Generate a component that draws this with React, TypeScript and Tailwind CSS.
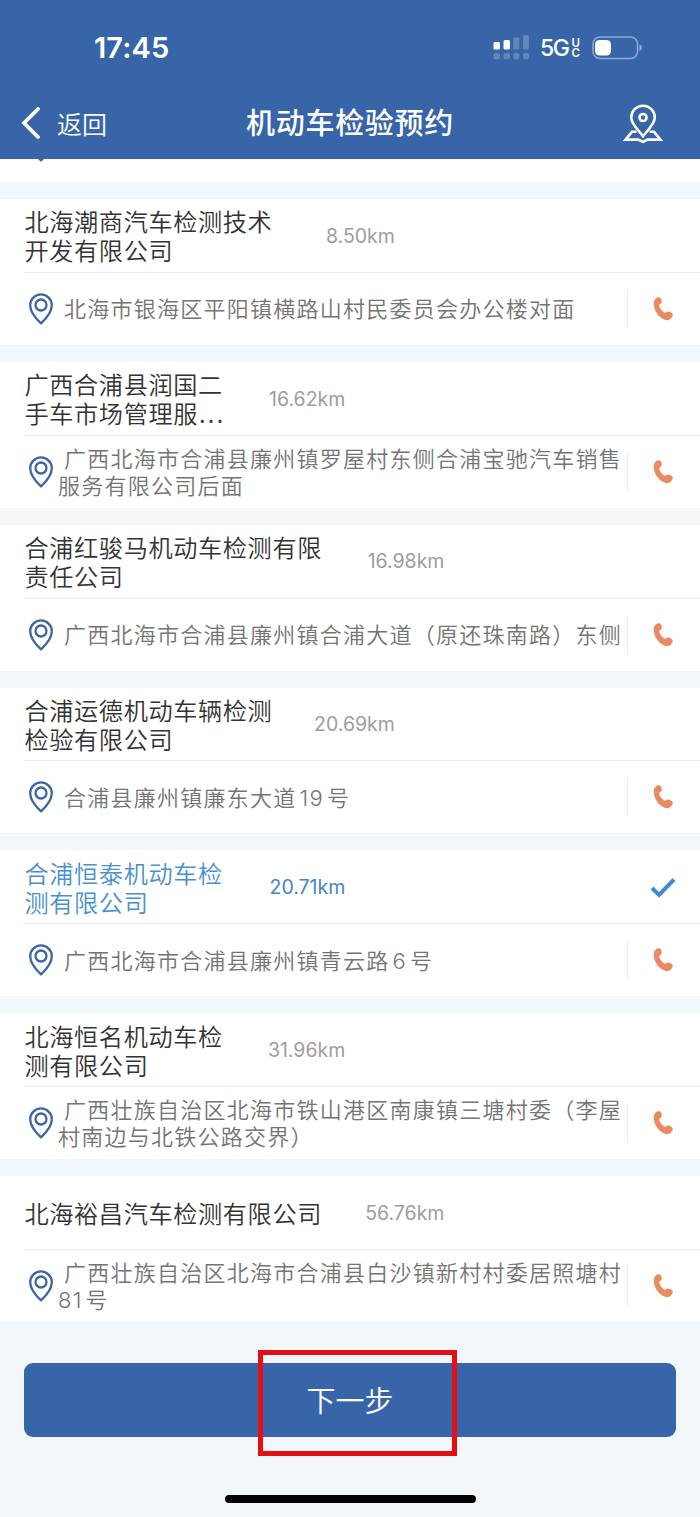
import { Fragment } from 'react';
import { clsx } from 'clsx';

interface Station {
  name: string[];
  truncated?: boolean;
  distance: string;
  address: string[];
  selected?: boolean;
}

const stations: Station[] = [
  {
    name: ['北海潮商汽车检测技术', '开发有限公司'],
    distance: '8.50km',
    address: ['北海市银海区平阳镇横路山村民委员会办公楼对面'],
  },
  {
    name: ['广西合浦县润国二', '手车市场管理服'],
    truncated: true,
    distance: '16.62km',
    address: ['广西北海市合浦县廉州镇罗屋村东侧合浦宝驰汽车销售', '服务有限公司后面'],
  },
  {
    name: ['合浦红骏马机动车检测有限', '责任公司'],
    distance: '16.98km',
    address: ['广西北海市合浦县廉州镇合浦大道（原还珠南路）东侧'],
  },
  {
    name: ['合浦运德机动车辆检测', '检验有限公司'],
    distance: '20.69km',
    address: ['合浦县廉州镇廉东大道19号'],
  },
  {
    name: ['合浦恒泰机动车检', '测有限公司'],
    distance: '20.71km',
    address: ['广西北海市合浦县廉州镇青云路6号'],
    selected: true,
  },
  {
    name: ['北海恒名机动车检', '测有限公司'],
    distance: '31.96km',
    address: ['广西壮族自治区北海市铁山港区南康镇三塘村委（李屋', '村南边与北铁公路交界）'],
  },
  {
    name: ['北海裕昌汽车检测有限公司'],
    distance: '56.76km',
    address: ['广西壮族自治区北海市合浦县白沙镇新村村委居照塘村', '81号'],
  },
];

function PinIcon() {
  return (
    <svg width="24" height="32" viewBox="0 0 24 32" fill="none" stroke="#3c66a3" strokeWidth="2.300">
      <path d="M12 30.300C9.500 28 1.200 19.500 1.200 12.200a10.800 10.800 0 0 1 21.600 0C22.800 19.500 14.500 28 12 30.300Z" strokeLinejoin="round" />
      <circle cx="12" cy="12" r="5.500" />
    </svg>
  );
}

function PhoneIcon() {
  return (
    <svg width="21" height="26" viewBox="0 0 22 26" fill="#ea8a62">
      <path d="M2.300 2.500C3.700 .9 6.300.3 7.700 1.200c1.300.9 1.900 4.200 1.200 5.600-.5 1-2 1.200-2.300 2.100-.5 1.900 3.200 7 5.400 8 1.200.4 2.200-1.100 3.600-1.200 1.900-.1 4.900 1.500 5.100 3.300.2 2.100-2.700 5.600-5.400 5.700C8.900 24.900 1.300 17 .9 8.600.8 6.300.9 4 2.300 2.500Z" />
    </svg>
  );
}

function StatusBar() {
  return (
    <div className="flex h-24 items-center justify-between pr-[57px] pl-[94px]">
      <span className="font-['Inter'] text-[29px] font-semibold tracking-[0.100px]">17:45</span>
      <div className="flex items-center">
        <svg width="37" height="26" viewBox="0 0 37 26" fill="#fff">
          <rect x="0.500" y="7" width="6.500" height="7.500" rx="1.500" />
          <rect x="10.500" y="5" width="6.500" height="9.500" rx="1.500" />
          <g fillOpacity=".22">
            <rect x="20.300" y="2.500" width="6" height="12" rx="1.500" />
            <rect x="30" y="0" width="6" height="14.500" rx="1.500" />
            <rect x="0.500" y="18" width="6.500" height="6.500" rx="2" />
            <rect x="10.500" y="18" width="6.500" height="6.500" rx="2" />
            <rect x="20.300" y="18" width="6" height="6.500" rx="2" />
            <rect x="30" y="18" width="6" height="6.500" rx="2" />
          </g>
        </svg>
        <span className="ml-2.5 font-['Inter'] text-[23px] font-medium tracking-[-1.500px]">5G</span>
        <span className="ml-[3px] flex flex-col font-['Inter'] text-[11.500px] leading-[10px] font-semibold">
          <span>U</span>
          <span>C</span>
        </span>
        <svg className="ml-3" width="51" height="24" viewBox="0 0 51 24" fill="none">
          <rect x="1" y="1" width="44.500" height="21.500" rx="7" stroke="#fff" strokeOpacity=".45" strokeWidth="1.600" />
          <rect x="3" y="4" width="16" height="15.500" rx="4.500" fill="#fff" />
          <path d="M47.500 8.500c3 1 3 5.500 0 6.500Z" fill="#fff" fillOpacity=".5" />
        </svg>
      </div>
    </div>
  );
}

function NavBar() {
  return (
    <div className="grid h-[63px] grid-cols-[1fr_auto_1fr] items-center pb-2.5">
      <div className="flex items-center pl-5">
        <svg width="21" height="32" viewBox="0 0 21 32" fill="none" stroke="#fff" strokeWidth="3.800">
          <path d="M18 2 4 16l14 14" strokeLinecap="round" />
        </svg>
        <span className="ml-4 text-[25px] leading-9 font-[350]">返回</span>
      </div>
      <h1 className="-mt-[3px] text-[29px] leading-9 font-medium tracking-[0.700px]">机动车检验预约</h1>
      <svg className="mt-0.5 mr-9 justify-self-end" width="42" height="40" viewBox="0 0 42 40" fill="none" stroke="#fff" strokeWidth="2.600">
        <path d="M21 32.200C18.500 28.500 9.200 20.500 9.200 13.500a11.800 11.800 0 0 1 23.600 0C32.800 20.500 23.500 28.500 21 32.200Z" />
        <circle cx="21" cy="13.500" r="3.500" />
        <path d="M14.500 27.800H10L3.500 35.600H16.500L21 38l4.500-2.400h13L32 27.800h-4.500" />
      </svg>
    </div>
  );
}

// numbers inside an address get a little air on both sides
function AddressLine({ text }: { text: string }) {
  return (
    <>
      {text.split(/(\d+)/).filter(Boolean).map((part, i) =>
        /^\d+$/.test(part) ? (
          <span key={i} className={clsx('mr-[3px] inline-block indent-0', i > 0 && 'ml-[3px]')}>
            {part}
          </span>
        ) : (
          <Fragment key={i}>{part}</Fragment>
        ),
      )}
    </>
  );
}

function StationCard({ station }: { station: Station }) {
  return (
    <li className="bg-white">
      <div className="ml-6 flex h-[73.850px] items-center border-b border-[#e8eaeb] pt-0.5 pr-6">
        <h2
          className={clsx(
            'mb-0.5 pl-[0.500px] text-[24.200px] leading-[29px] font-[350] tracking-[0.600px] whitespace-nowrap',
            station.selected ? 'text-[#4a90cf]' : 'text-[#333333]',
          )}
        >
          {station.name.map((line, i) => (
            <span key={line} className="block">
              {line}
              {station.truncated && i === station.name.length - 1 && (
                <span className="-mr-1 ml-px tracking-[2.300px]">...</span>
              )}
            </span>
          ))}
        </h2>
        <span
          className={clsx(
            "w-[122.500px] text-right font-['Inter'] text-[19.500px]",
            station.selected ? 'text-[#4585c2]' : 'text-[#9d9d9d]',
          )}
        >
          {station.distance}
        </span>
        {station.selected && (
          <svg className="ml-auto" width="26" height="22" viewBox="0 0 26 22" fill="none" stroke="#428bd2" strokeWidth="4">
            <path d="m2 11 7 7L24 2.500" />
          </svg>
        )}
      </div>
      <div className="flex h-[72px] items-center pl-[29px]">
        <PinIcon />
        <p className="mt-0.5 ml-[5px] w-[569px] indent-[6px] font-['Inter','Noto_Sans_CJK_SC',sans-serif] text-[22px] leading-[27px] font-[350] tracking-[1.250px] whitespace-nowrap text-[#747474]">
          {station.address.map((line, i) => (
            <span key={line} className={clsx('block', i > 0 && 'indent-0')}>
              <AddressLine text={line} />
            </span>
          ))}
        </p>
        <div className="flex h-10 items-center border-l border-[#eeeeee] pl-[25px]">
          <PhoneIcon />
        </div>
      </div>
    </li>
  );
}

export default function App() {
  return (
    <div className="flex h-[1517px] w-[700px] flex-col overflow-hidden bg-[#f3f7f9] font-['Noto_Sans_CJK_SC',sans-serif]">
      <header className="h-[159px] shrink-0 bg-[#3865a7] text-white">
        <StatusBar />
        <NavBar />
      </header>

      <main>
        {/* tail of the card scrolled under the header */}
        <div className="h-[23px] overflow-hidden bg-white pl-[29px]">
          <div className="-mt-[29px]">
            <PinIcon />
          </div>
        </div>
        <ul className="mt-[17px] flex flex-col gap-[17px]">
          {stations.map((station) => (
            <StationCard key={station.distance} station={station} />
          ))}
        </ul>
      </main>

      <footer className="relative mt-[41px] px-6">
        <button className="h-[74px] w-full rounded-[9px] bg-[#3865a7] text-[29px] font-[350] text-white">下一步</button>
        <div className="pointer-events-none absolute -top-[13px] left-[258px] h-[106px] w-[199px] border-5 border-[#e30f13]" />
      </footer>
      <div className="mx-auto mt-[58px] h-2 w-[251px] rounded-full bg-black" />
    </div>
  );
}
